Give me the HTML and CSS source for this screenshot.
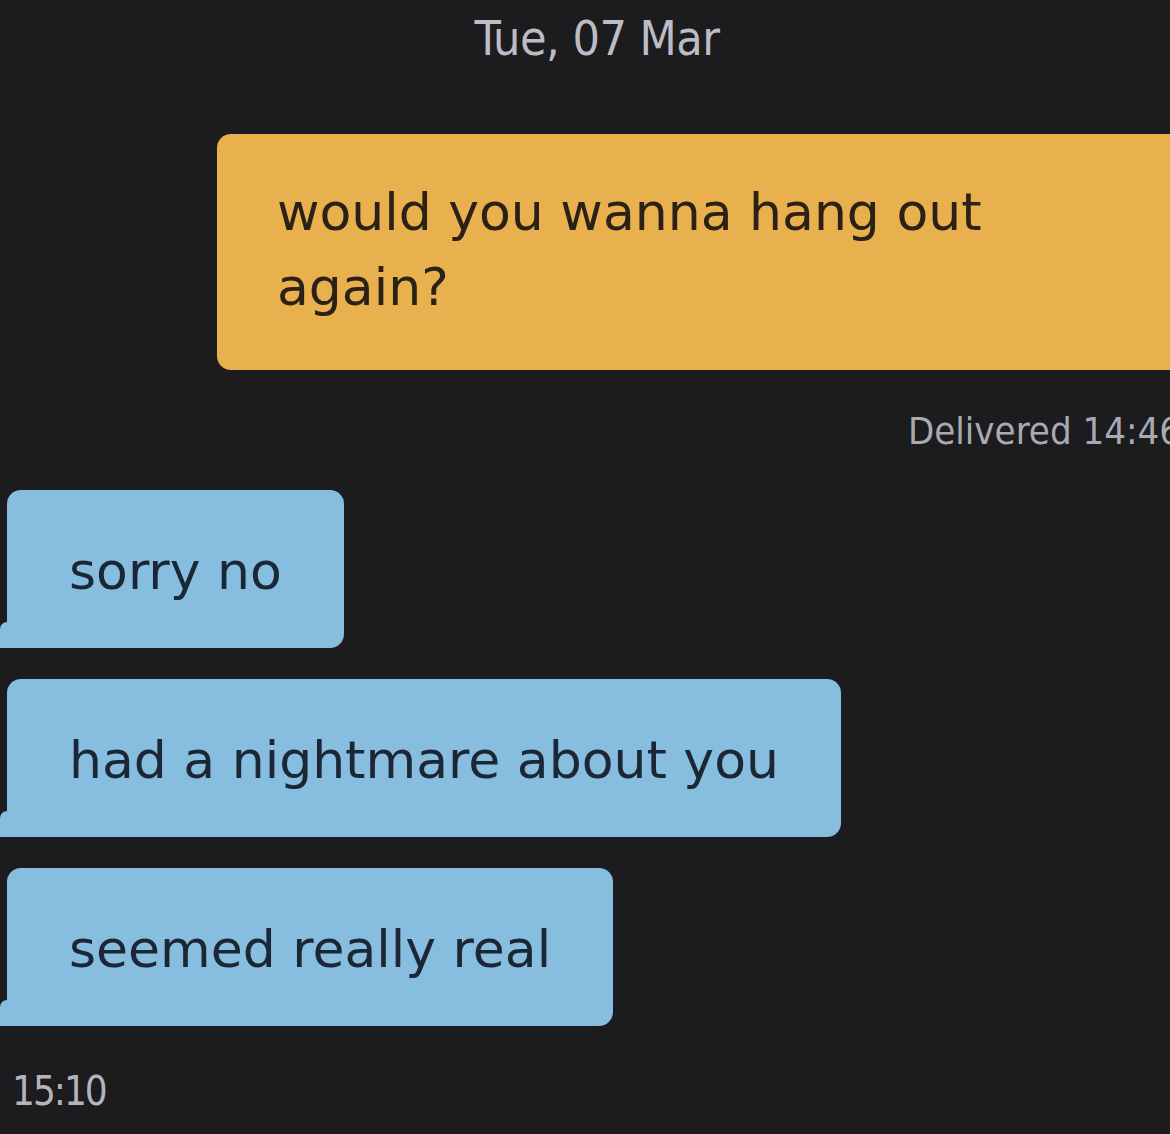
FILE: index.html
```html
<!DOCTYPE html>
<html lang="en">
<head>
    <meta charset="UTF-8">
    <meta name="viewport" content="width=device-width, initial-scale=1.0">
    <title>Chat</title>
    <link rel="stylesheet" href="styles.css">
</head>
<body>

    <div class="chat">
        <div class="date">Tue, 07 Mar</div>

        <div class="row-out">
            <div class="bubble-out">would you wanna hang out<br>again?</div>
        </div>
        <div class="status">Delivered 14:46</div>

        <div class="bubble-in">sorry no</div>
        <div class="bubble-in">had a nightmare about you</div>
        <div class="bubble-in">seemed really real</div>

        <div class="time">15:10</div>
    </div>

</body>
</html>
```

FILE: styles.css
```css
html, body {
    margin: 0;
    padding: 0;
    background-color: #1c1b1e;
    overflow: hidden;
}
body {
    width: 1170px;
    height: 1134px;
    font-family: "DejaVu Sans", "Open Sans", sans-serif;
}
.chat {
    display: flex;
    flex-direction: column;
    align-items: flex-start;
}
.date {
    align-self: stretch;
    text-align: center;
    padding-top: 8px;
    padding-left: 24px;
    height: 134px;
    box-sizing: border-box;
    font-family: "DejaVu Sans Condensed", "DejaVu Sans", sans-serif;
    font-stretch: condensed;
    font-size: 48px;
    line-height: 60px;
    letter-spacing: -0.5px;
    color: #bcbcc5;
}
.row-out {
    align-self: stretch;
    padding-left: 217px;
}
.bubble-out {
    background-color: #e8b14e;
    color: #2b2116;
    border-radius: 14px 0 0 14px;
    height: 236px;
    box-sizing: border-box;
    padding: 41px 0 0 60px;
    font-size: 52px;
    line-height: 75px;
    margin-right: -40px;
}
.status {
    padding-left: 908px;
    margin-top: 38px;
    margin-bottom: 36px;
    white-space: nowrap;
    font-family: "DejaVu Sans Condensed", "DejaVu Sans", sans-serif;
    font-stretch: condensed;
    font-size: 38px;
    line-height: 46px;
    color: #a9a9b2;
}
.bubble-in {
    position: relative;
    margin-left: 7px;
    margin-bottom: 31px;
    background-color: #87bddf;
    color: #1c2735;
    border-radius: 14px 14px 14px 0;
    height: 158px;
    box-sizing: border-box;
    padding: 46px 62px 0 62px;
    font-size: 52px;
    line-height: 70px;
    white-space: nowrap;
}
.bubble-in::before {
    content: "";
    position: absolute;
    left: -7px;
    bottom: 0;
    width: 7px;
    height: 26px;
    background-color: #87bddf;
    border-top-left-radius: 7px;
}
.time {
    margin-left: 12px;
    margin-top: 8px;
    font-family: "DejaVu Sans Condensed", "DejaVu Sans", sans-serif;
    font-stretch: condensed;
    font-size: 40px;
    line-height: 52px;
    letter-spacing: -2px;
    color: #b4b4bc;
}
```
